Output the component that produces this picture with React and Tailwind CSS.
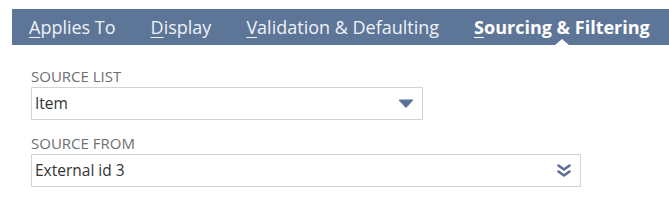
import React from "react";

function Tab({ first, rest, active, className = "" }) {
  return (
    <div className={`relative flex h-full items-center ${className}`}>
      <span className={`text-[18px] leading-none ${active ? "font-bold text-white" : "text-[#eef2f7]"}`}>
        <span className="underline decoration-1 underline-offset-[3px]">{first}</span>
        {rest}
      </span>
      {active && (
        <div className="absolute bottom-0 left-1/2 h-0 w-0 -translate-x-1/2 border-x-[7px] border-b-[6px] border-x-transparent border-b-white" />
      )}
    </div>
  );
}

function Field({ label, value, width, icon }) {
  return (
    <div className="flex flex-col">
      <div className="text-[15px] leading-[20px] uppercase text-[#6f6f6f]">{label}</div>
      <div
        className="mt-[1px] flex h-[33px] items-center justify-between border border-[#d3d3d3] bg-white pl-[3px] pr-[7px]"
        style={{ width }}
      >
        <span className="text-[15.5px] text-[#333333]">{value}</span>
        {icon}
      </div>
    </div>
  );
}

export default function App() {
  return (
    <div className="h-[202px] w-[669px] bg-white" style={{ fontFamily: '"Open Sans", Arial, sans-serif' }}>
      <div className="pt-[9px] pl-[12px]">
        <div className="flex h-[36px] items-center bg-[#5d7597] pl-[17px]">
          <Tab first="A" rest="pplies To" className="mr-[35px]" />
          <Tab first="D" rest="isplay" className="mr-[35px]" />
          <Tab first="V" rest="alidation & Defaulting" className="mr-[35px]" />
          <Tab first="S" rest="ourcing & Filtering" active />
        </div>
      </div>
      <div className="flex flex-col gap-[13px] pl-[31px] pt-[21px]">
        <Field
          label="Source List"
          value="Item"
          width="392px"
          icon={
            <svg width="16" height="9" viewBox="0 0 16 9" className="mr-[1px]">
              <path d="M1 1.5 Q0.5 0.5 2 0.5 L14 0.5 Q15.5 0.5 15 1.5 L9 8 Q8 9 7 8 Z" fill="#5b7197" />
            </svg>
          }
        />
        <Field
          label="Source From"
          value="External id 3"
          width="550px"
          icon={
            <svg width="14" height="13" viewBox="0 0 14 13" className="mr-[2px]">
              <path d="M1.5 1.5 L7 5.5 L12.5 1.5" fill="none" stroke="#5b7197" strokeWidth="2.6" strokeLinejoin="round" strokeLinecap="round" />
              <path d="M1.5 7.5 L7 11.5 L12.5 7.5" fill="none" stroke="#5b7197" strokeWidth="2.6" strokeLinejoin="round" strokeLinecap="round" />
            </svg>
          }
        />
      </div>
    </div>
  );
}
